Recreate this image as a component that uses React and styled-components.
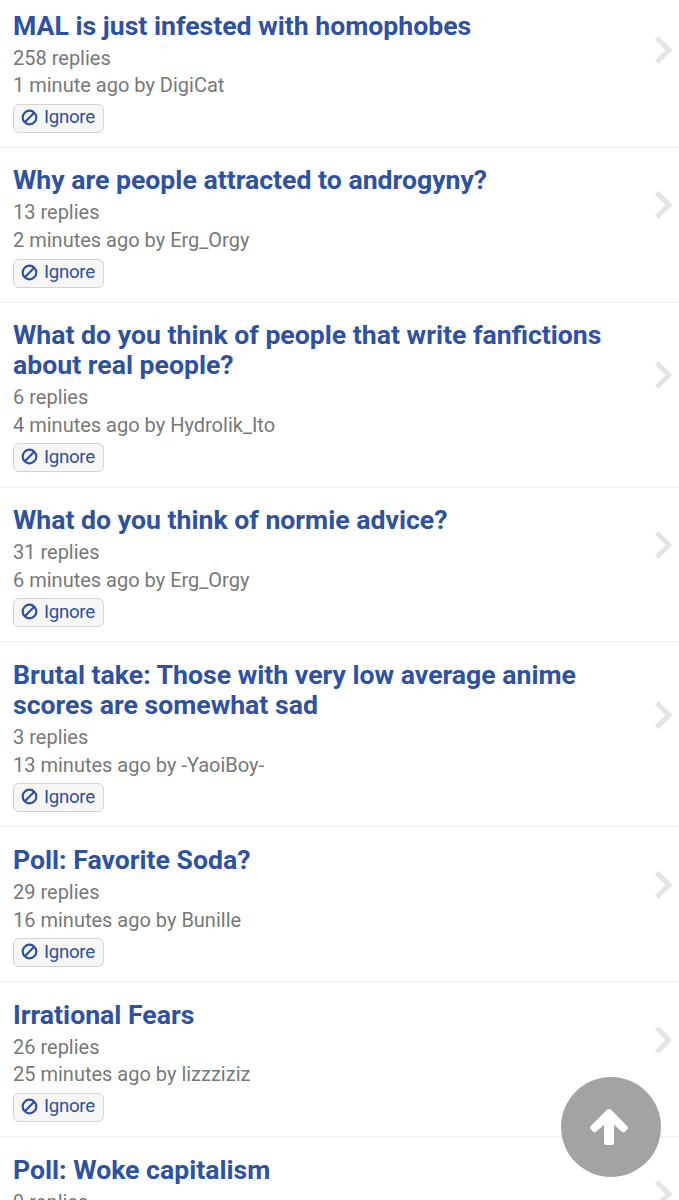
import React from 'react'
import styled, { createGlobalStyle } from 'styled-components'

const GlobalStyle = createGlobalStyle`
	html, body {
		margin: 0;
		height: 1200px;
		overflow: hidden;
		background: #fff;
		font-family: Roboto, sans-serif;
	}
`

// The list is scrolled a little past the top of its first row.
const List = styled.main`
	height: 1200px;
	overflow: hidden;

	& > :first-child {
		margin-top: -7px;
	}
`

const Topic = styled.article`
	display: flex;
	align-items: center;
	box-sizing: border-box;
	height: ${props => (props.$tall ? 185 : 154.8)}px;
	padding: 0 6px 0 13px;
	border-bottom: 1px solid #f2f2f2;
`

const Content = styled.div`
	flex: 1;
	align-self: flex-start;
	padding-top: 17.6px;
`

const Title = styled.h2`
	margin: 0 0 4px;
	font-size: 26.63px;
	font-weight: 700;
	line-height: 30px;
	color: #2e51a2;
	white-space: pre-line;
`

const Meta = styled.div`
	font-size: 20px;
	line-height: 27.6px;
	color: #787878;
`

const Ignore = styled.button`
	display: flex;
	align-items: center;
	gap: 6px;
	box-sizing: border-box;
	width: 91px;
	height: 29px;
	margin: 4px 0 0;
	padding: 0 7px 2px;
	border: 1px solid #d4d4d4;
	border-radius: 6px;
	background: #f6f6f6;
	font: 18.7px Roboto, sans-serif;
	letter-spacing: -.3px;
	color: #2e51a2;
`

const Chevron = styled.svg`
	flex: none;
	width: 19px;
	height: 30px;
	margin-bottom: 39px;
	fill: none;
	stroke: #e4e4e4;
	stroke-width: 5;
`

const Ban = styled.svg`
	flex: none;
	width: 17px;
	height: 17px;
	fill: none;
	stroke: currentColor;
	stroke-width: 2.2;
`

const Top = styled.button`
	position: fixed;
	left: 560.5px;
	top: 1076.5px;
	display: flex;
	align-items: center;
	justify-content: center;
	width: 100px;
	height: 100px;
	padding: 0 3px 0 0;
	border: 0;
	border-radius: 50%;
	background: rgba(132, 132, 132, .75);
	color: #fff;
`

const topics = [
	{ title: 'MAL is just infested with homophobes', replies: 258, age: '1 minute', user: 'DigiCat' },
	{ title: 'Why are people attracted to androgyny?', replies: 13, age: '2 minutes', user: 'Erg_Orgy' },
	{ title: 'What do you think of people that write fanfictions\nabout real people?', replies: 6, age: '4 minutes', user: 'Hydrolik_Ito' },
	{ title: 'What do you think of normie advice?', replies: 31, age: '6 minutes', user: 'Erg_Orgy' },
	{ title: 'Brutal take: Those with very low average anime\nscores are somewhat sad', replies: 3, age: '13 minutes', user: '-YaoiBoy-' },
	{ title: 'Poll: Favorite Soda?', replies: 29, age: '16 minutes', user: 'Bunille' },
	{ title: 'Irrational Fears', replies: 26, age: '25 minutes', user: 'lizzziziz' },
]

const App = () => (
	<>
		<GlobalStyle />
		<List>
			{topics.map(topic => (
				<Topic key={topic.title} $tall={topic.title.includes('\n')}>
					<Content>
						<Title>{topic.title}</Title>
						<Meta>{topic.replies} replies</Meta>
						<Meta>{topic.age} ago by {topic.user}</Meta>
						<Ignore>
							<Ban viewBox="0 0 17 17">
								<circle cx="8.5" cy="8.5" r="6.8" />
								<path d="M3.8 13.2 13.2 3.8" />
							</Ban>
							Ignore
						</Ignore>
					</Content>
					<Chevron viewBox="0 0 19 30">
						<path d="M2.7 2.8 14.9 15 2.7 27.2" />
					</Chevron>
				</Topic>
			))}
			<Topic>
				<Content>
					<Title>Poll: Woke capitalism</Title>
					<Meta>9 replies</Meta>
				</Content>
				<Chevron viewBox="0 0 19 30">
					<path d="M2.7 2.8 14.9 15 2.7 27.2" />
				</Chevron>
			</Topic>
		</List>
		<Top aria-label="Back to top">
			<svg width="40" height="38" fill="currentColor">
				<path d="M18.2 1.6 1.6 18.2q-1.2 1.4 0 2.8l2.6 2.7q1.4 1.3 2.8 0l8-7v17.8q0 2.6 2.4 2.6h5.2q2.4 0 2.4-2.6V16.7l8 7q1.4 1.3 2.8 0l2.6-2.7q1.2-1.4 0-2.8L21.8 1.6q-1.8-1.4-3.6 0z" />
			</svg>
		</Top>
	</>
)

export default App
